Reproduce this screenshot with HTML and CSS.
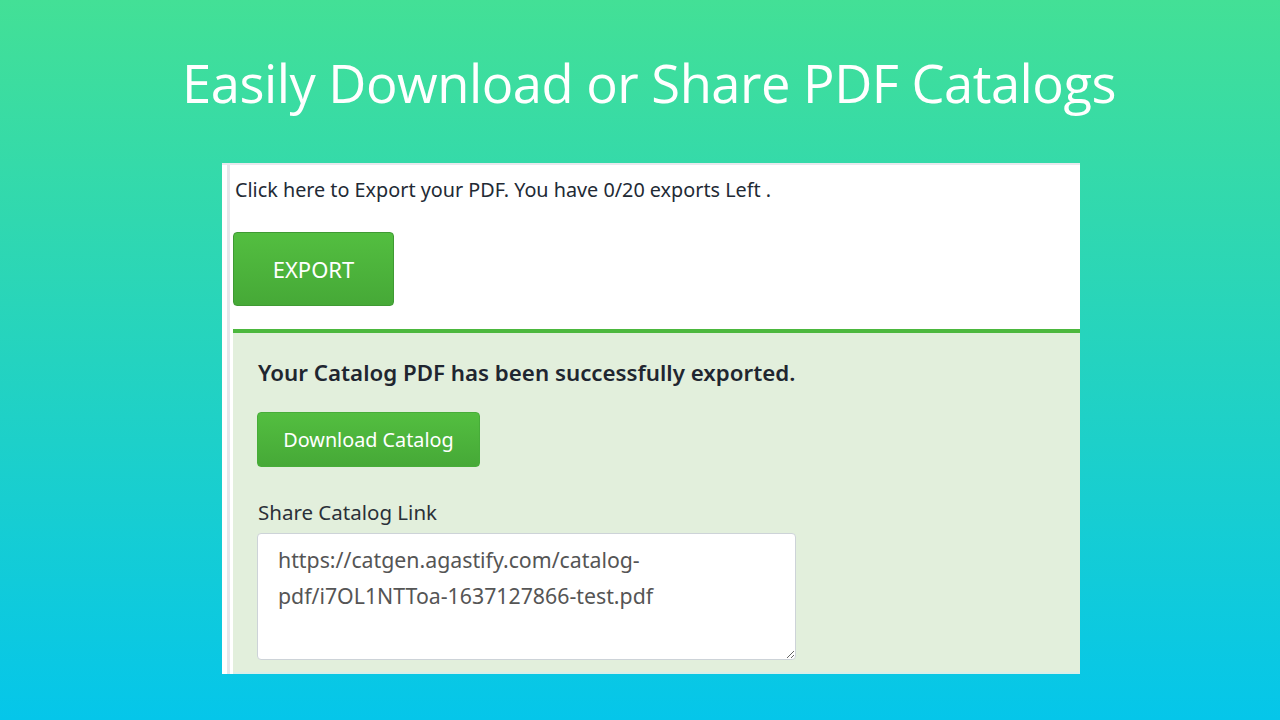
FILE: index.html
```html
<!DOCTYPE html>
<html>
<head>
<meta charset="utf-8">
<link rel="stylesheet" href="styles.css">
</head>
<body>
<div class="page">
  <h1 class="title">Easily Download or Share PDF Catalogs</h1>
  <div class="panel">
    <div class="panel-inner">
      <p class="intro">Click here to Export your PDF. You have 0/20 exports Left .</p>
      <button class="btn btn-export">EXPORT</button>
      <div class="success">
        <h2 class="success-title">Your Catalog PDF has been successfully exported.</h2>
        <button class="btn btn-download">Download Catalog</button>
        <label class="share-label">Share Catalog Link</label>
        <textarea class="share-box" readonly>https://catgen.agastify.com/catalog-pdf/i7OL1NTToa-1637127866-test.pdf</textarea>
      </div>
    </div>
  </div>
</div>
</body>
</html>
```

FILE: styles.css
```css
* { box-sizing: border-box; }
html, body { margin: 0; padding: 0; }
body {
  width: 1280px;
  height: 720px;
  overflow: hidden;
  background: linear-gradient(to bottom, #43e096 0%, #05c6ea 100%);
  font-family: "Noto Sans", "Open Sans", sans-serif;
}
.page {
  display: flex;
  flex-direction: column;
  align-items: center;
  padding-top: 47px;
}
.title {
  margin: 0 0 0 18px;
  height: 116px;
  color: #ffffff;
  font-family: "Open Sans", "Noto Sans", sans-serif;
  font-weight: 400;
  font-size: 52.5px;
  line-height: 72px;
  letter-spacing: -0.5px;
}
.panel {
  width: 858px;
  height: 511px;
  background: #ffffff;
  border-top: 2px solid #e8e9ee;
  padding-left: 5px;
  margin-left: 22px;
}
.panel-inner {
  height: 100%;
  border-left: 3px solid #e6e7eb;
  padding-left: 3px;
  display: flex;
  flex-direction: column;
  align-items: flex-start;
}
.intro {
  margin: 12px 0 0 2px;
  font-size: 19.8px;
  line-height: 26px;
  color: #222a35;
}
.btn {
  font-family: "Noto Sans", "Open Sans", sans-serif;
  color: #ffffff;
  border: 1px solid #3f9a33;
  border-radius: 4px;
  background: linear-gradient(to bottom, #53be40 0%, #46a937 100%);
  cursor: pointer;
}
.btn-export {
  margin-top: 29px;
  width: 161px;
  height: 74px;
  font-size: 22px;
  padding: 0;
}
.success {
  margin-top: 23px;
  align-self: stretch;
  flex: 1;
  background: #e2efdc;
  border-top: 4px solid #4cb83e;
  border-bottom: 2px solid #d9eee8;
  padding: 25px 0 0 24px;
  display: flex;
  flex-direction: column;
  align-items: flex-start;
}
.success-title {
  margin: 0 0 0 1px;
  font-size: 22.3px;
  line-height: 30px;
  font-weight: 600;
  color: #1f2630;
}
.btn-download {
  margin-top: 24px;
  width: 223px;
  height: 55px;
  font-size: 19.8px;
  padding: 0;
  border-color: #47ad39;
}
.share-label {
  margin: 32px 0 0 1px;
  font-size: 20.5px;
  line-height: 26px;
  color: #2a3038;
}
.share-box {
  margin-top: 8px;
  width: 539px;
  height: 127px;
  border: 1px solid #cdd3d8;
  border-radius: 4px;
  background: #ffffff;
  padding: 8px 20px;
  font-family: "Noto Sans", "Open Sans", sans-serif;
  font-size: 21.3px;
  line-height: 36px;
  color: #555555;
  resize: vertical;
  outline: none;
}
```
